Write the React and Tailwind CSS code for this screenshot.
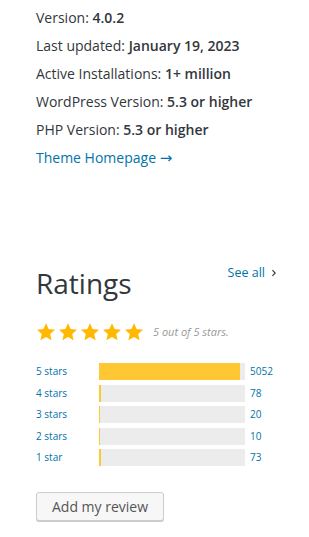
const meta = [
  ['Version:', '4.0.2'],
  ['Last updated:', 'January 19, 2023'],
  ['Active Installations:', '1+ million'],
  ['WordPress Version:', '5.3 or higher'],
  ['PHP Version:', '5.3 or higher'],
];

const ratings = [
  { label: '5 stars', count: 5052 },
  { label: '4 stars', count: 78 },
  { label: '3 stars', count: 20 },
  { label: '2 stars', count: 10 },
  { label: '1 star', count: 73 },
];

const total = ratings.reduce((s, r) => s + r.count, 0);

function Star() {
  return (
    <svg viewBox="0 0 20 20" className="w-[20px] h-[20px]" fill="#ffb900">
      <path d="M10 1.2l2.6 5.9 6.4.6-4.8 4.3 1.4 6.3L10 15l-5.6 3.3 1.4-6.3L1 7.7l6.4-.6z" />
    </svg>
  );
}

export default function App() {
  return (
    <div
      className="min-h-[537px] bg-white text-[#32373c] pl-9 pr-[30px] pt-1"
      style={{ fontFamily: '"Open Sans", sans-serif' }}
    >
      {/* Theme meta */}
      <ul className="text-[14px] leading-[28px]">
        {meta.map(([k, v]) => (
          <li key={k}>
            {k} <strong className="font-semibold">{v}</strong>
          </li>
        ))}
        <li>
          <a className="text-[#0073aa]">
            Theme Homepage <span className="text-[15px]" style={{ fontFamily: '"DejaVu Sans", sans-serif' }}>→</span>
          </a>
        </li>
      </ul>

      {/* Ratings */}
      <section className="mt-[93px]">
        <div className="flex justify-between items-start">
          <h2 className="text-[28px] leading-[36px]">Ratings</h2>
          <a className="text-[12.5px] leading-[18px] text-[#0073aa] flex items-center gap-[5px] mt-[-1px] mr-[1px]">
            See all
            <svg viewBox="0 0 10 10" className="w-[8px] h-[10px]" fill="none" stroke="#32373c" strokeWidth="1.4">
              <path d="M3 1.5l3.5 3.5L3 8.5" />
            </svg>
          </a>
        </div>

        <div className="flex items-center mt-[21px] h-[20px]">
          <div className="flex gap-[2px]">
            {[0, 1, 2, 3, 4].map((i) => (
              <Star key={i} />
            ))}
          </div>
          <span className="ml-[9px] text-[11px] italic text-[#999]">5 out of 5 stars.</span>
        </div>

        <ul className="mt-[21px] flex flex-col gap-[4.5px]">
          {ratings.map((r) => (
            <li key={r.label} className="flex items-center h-[17px] text-[10px]">
              <span className="w-[63px] text-[#0073aa]">{r.label}</span>
              <span className="w-[146px] h-[17px] bg-[#ececec]">
                <span
                  className="block h-full bg-[#ffc733]"
                  style={{ width: Math.max(1, Math.round((r.count / total) * 146)) + 'px' }}
                />
              </span>
              <span className="ml-[5px] text-[#0073aa]">{r.count}</span>
            </li>
          ))}
        </ul>

        <button className="mt-[26px] w-[128px] h-[29px] border border-[#ccc] rounded-[3px] bg-[#f7f7f7] text-[14px] text-[#555] shadow-[0_1px_0_#ccc]">
          Add my review
        </button>
      </section>
    </div>
  );
}
